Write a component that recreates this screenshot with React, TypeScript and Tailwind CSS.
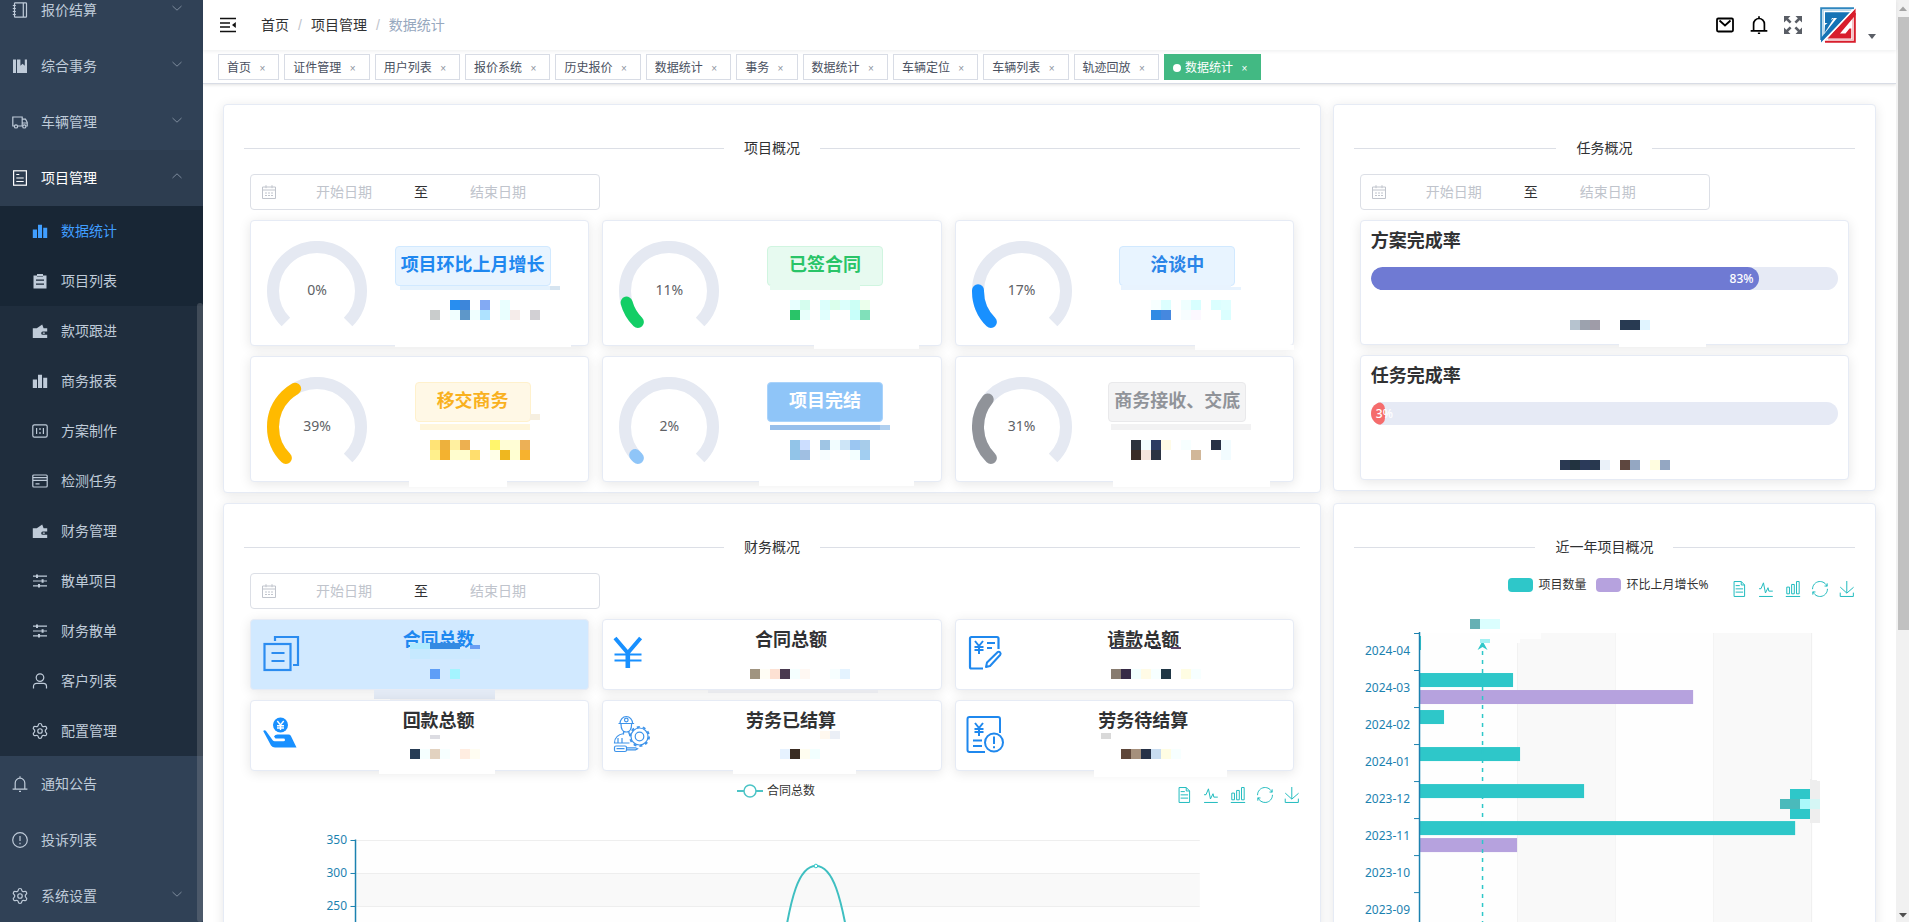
import type { ReactNode } from "react";
import { Settings } from "lucide-react";
import clsx from "clsx";

/* ---------- icons ---------- */

type IconName =
  | "notebook"
  | "collection"
  | "van"
  | "document"
  | "histogram"
  | "list"
  | "wallet"
  | "film"
  | "postcard"
  | "operation"
  | "user"
  | "bell"
  | "warning"
  | "setting";

const iconShapes: Record<Exclude<IconName, "setting">, ReactNode> = {
  notebook: (
    <>
      <rect x="2.5" y="0.8" width="12" height="14.4" rx="0.8" />
      <path d="M11.3 1v14M0.8 3.5h3M0.8 6.5h3M0.8 9.5h3M0.8 12.5h3" />
    </>
  ),
  collection: (
    <path
      fill="currentColor"
      stroke="none"
      d="M1 1.5h3v13.5H1zM5 1.5h3.4v6.2l2.2-1.9 2.2 1.9V1.5H15V15H5z"
    />
  ),
  van: (
    <>
      <path d="M2.2 12H.8V3h9.4v9H5.8M10.2 5.2h3.3l1.7 3.1V12h-1M10.2 12v-3h5" />
      <circle cx="4" cy="12.4" r="1.6" />
      <circle cx="12.3" cy="12.4" r="1.6" />
    </>
  ),
  document: (
    <>
      <rect x="1.6" y="0.8" width="12.8" height="14.4" />
      <path d="M4.3 4.5h3M4.3 8h7.4M4.3 11.5h7.4" />
    </>
  ),
  histogram: (
    <path fill="currentColor" stroke="none" d="M.8 6.5H5V15H.8zM6 1.8h4V15H6zM11.2 4.8h4V15h-4z" />
  ),
  list: (
    <path
      fill="currentColor"
      stroke="none"
      fillRule="evenodd"
      d="M1.5 2.5H5V1h6v1.5h3.5V15.5h-13zM5 3.6h6V2.9H5zM4 6.5v1.2h8V6.5zM4 10.5v1.2h8v-1.2z"
    />
  ),
  wallet: (
    <path
      fill="currentColor"
      stroke="none"
      fillRule="evenodd"
      d="M.8 5.2h4L10.2 1.4l1.4 3.8h3.6v3.4h-4.4a1.6 1.6 0 0 0 0 3.2h4.4V15H.8zM10.8 9.4h2v1.4h-2z"
    />
  ),
  film: (
    <>
      <rect x="0.8" y="1.8" width="14.4" height="12.4" rx="1.6" />
      <path d="M4.6 5v6M11.4 5v6M8 5v2M8 9v2" />
    </>
  ),
  postcard: (
    <>
      <rect x="0.8" y="2" width="14.4" height="12" rx="1" />
      <path d="M1 4.6h14M1 7.4h14M3.5 10.8h4" />
    </>
  ),
  operation: (
    <>
      <path d="M1 3.2h14M1 8h14M1 12.8h14" />
      <path strokeWidth="2" d="M5 1.4V5M10.6 6.2v3.6M7 11v3.6" />
    </>
  ),
  user: (
    <>
      <circle cx="8" cy="4.6" r="3.8" />
      <path d="M1.5 15.5v-2.2a3 3 0 0 1 3-3h7a3 3 0 0 1 3 3v2.2" />
    </>
  ),
  bell: <path d="M8 .3v1.4M3.2 13V7a4.8 4.8 0 0 1 9.6 0v6M.6 13.2h14.8M7 15.4h2" />,
  warning: (
    <>
      <circle cx="8" cy="8" r="7.3" />
      <path d="M8 4v5M8 10.8v1.4" />
    </>
  ),
};

function Icon({ name }: { name: IconName }) {
  if (name === "setting") return <Settings className="-mx-px size-[18px] shrink-0" strokeWidth={1.6} />;
  return (
    <svg viewBox="0 0 16 16" className="size-4 shrink-0" fill="none" stroke="currentColor" strokeWidth="1.2">
      {iconShapes[name]}
    </svg>
  );
}

function Chevron({ up }: { up?: boolean }) {
  return (
    <svg viewBox="0 0 10 10" className="mb-1 size-2.5" fill="none" stroke="#7d8b9c" strokeWidth="1">
      <path d={up ? "M.5 7 5 2.8 9.5 7" : "M.5 3 5 7.2 9.5 3"} />
    </svg>
  );
}

/* ---------- sidebar ---------- */

type MenuItem = { label: string; icon: IconName; arrow?: boolean };

const topMenu: MenuItem[] = [
  { label: "报价结算", icon: "notebook", arrow: true },
  { label: "综合事务", icon: "collection", arrow: true },
  { label: "车辆管理", icon: "van", arrow: true },
];

const projectMenu: MenuItem[] = [
  { label: "数据统计", icon: "histogram" },
  { label: "项目列表", icon: "list" },
  { label: "款项跟进", icon: "wallet" },
  { label: "商务报表", icon: "histogram" },
  { label: "方案制作", icon: "film" },
  { label: "检测任务", icon: "postcard" },
  { label: "财务管理", icon: "wallet" },
  { label: "散单项目", icon: "operation" },
  { label: "财务散单", icon: "operation" },
  { label: "客户列表", icon: "user" },
  { label: "配置管理", icon: "setting" },
];

const bottomMenu: MenuItem[] = [
  { label: "通知公告", icon: "bell" },
  { label: "投诉列表", icon: "warning" },
  { label: "系统设置", icon: "setting", arrow: true },
];

function MenuRow({ item, open }: { item: MenuItem; open?: boolean }) {
  return (
    <button
      className={clsx(
        "flex h-14 w-full shrink-0 items-center gap-[13px] pr-[21px] pl-3 text-left",
        open ? "bg-[#2d3d50] text-white" : "text-[#bfcbd9]"
      )}
    >
      <Icon name={item.icon} />
      <span className="flex-1">{item.label}</span>
      {item.arrow && <Chevron up={open} />}
    </button>
  );
}

function Sidebar() {
  return (
    <aside className="relative w-[203px] shrink-0 overflow-hidden bg-[#304156]">
      <nav className="-mt-[18px] flex flex-col">
        {topMenu.map((item) => (
          <MenuRow key={item.label} item={item} />
        ))}
        <MenuRow item={{ label: "项目管理", icon: "document", arrow: true }} open />
        <div className="bg-[#1f2d3d]">
          {projectMenu.map((item, i) => (
            <a
              key={item.label}
              href="#"
              className={clsx(
                "flex h-[50px] items-center gap-[13px] pl-8",
                i === 0 ? "text-[#409eff]" : "text-[#bfcbd9]",
                i < 2 && "bg-[#182635]"
              )}
            >
              <Icon name={item.icon} />
              {item.label}
            </a>
          ))}
        </div>
        {bottomMenu.map((item) => (
          <MenuRow key={item.label} item={item} />
        ))}
      </nav>
      <div className="absolute top-[303px] right-0 bottom-0 w-1.5 rounded-full bg-[#909399]/30" />
    </aside>
  );
}

/* ---------- header ---------- */

function Logo() {
  return (
    <svg viewBox="0 0 36 36" className="size-9">
      <path d="M1.2 33V1.2H34" fill="none" stroke="#2f86bf" strokeWidth="2" />
      <path d="M3.2 30V3.2H31" fill="none" stroke="#a9d0e8" strokeWidth="1.2" />
      <path d="M34.8 6v28.8H5" fill="none" stroke="#d81e2c" strokeWidth="2" />
      <path d="M32.8 9v23.8H8" fill="none" stroke="#f0b4b8" strokeWidth="1.2" />
      <path d="M5 5.2h25.5L1 35.4V31L17 11h-5l-2 5H5z" fill="#1573b5" />
      <path d="M5 18 14 11 4.500 26z" fill="#1573b5" />
      <path d="M35.6 1.500v6.500L20 26.500h5.500l4-5H31.200V31.500H7.500L3.500 35.600z" fill="#d81e2c" />
      <path d="M33.500 2.200 2.600 35.600" stroke="#fff" strokeWidth="1.300" />
    </svg>
  );
}

function Header() {
  return (
    <header className="relative z-10 flex h-[50px] shrink-0 items-center bg-white pr-5 pl-[17px] shadow-[0_1px_4px_rgba(0,21,41,0.08)]">
      <button aria-label="折叠菜单" className="mr-[25px]">
        <svg viewBox="0 0 16 16" className="size-4" fill="none" stroke="#111" strokeWidth="1.5">
          <path d="M0 1.500h16M0 6h10M0 10h10M0 14.500h16" />
          <path d="M15.8 5v6L12 8z" fill="#111" stroke="none" />
        </svg>
      </button>
      <nav className="flex items-center gap-[9px] text-[#303133]">
        <a href="#">首页</a>
        <span className="text-[#c0c4cc]">/</span>
        <a href="#">项目管理</a>
        <span className="text-[#c0c4cc]">/</span>
        <span className="text-[#97a8be]">数据统计</span>
      </nav>
      <div className="mr-[18px] ml-auto flex items-center gap-4 text-black">
        <button aria-label="消息">
          <svg viewBox="0 0 18 18" className="size-[18px]" fill="none" stroke="currentColor" strokeWidth="1.8">
            <rect x="1" y="2.5" width="16" height="13" rx="1.2" />
            <path d="m3.500 4.500 5.500 5 5.500-5" />
          </svg>
        </button>
        <button aria-label="通知">
          <svg viewBox="0 0 16 16" className="size-[18px]" fill="none" stroke="currentColor" strokeWidth="1.5">
            {iconShapes.bell}
          </svg>
        </button>
        <button aria-label="全屏">
          <svg viewBox="0 0 18 18" className="size-[18px]" fill="#5a5e66" stroke="#5a5e66" strokeWidth="2.6">
            <path stroke="none" d="M0 0h6.5L0 6.5zM18 0v6.5L11.5 0zM0 18v-6.5L6.5 18zM18 18h-6.5l6.5-6.5z" />
            <path d="m2 2 4.6 4.6M16 2l-4.6 4.6M2 16l4.6-4.6M16 16l-4.6-4.6" />
          </svg>
        </button>
      </div>
      <button aria-label="账户" className="flex items-end gap-3">
        <Logo />
        <svg viewBox="0 0 8 5" className="mb-1 h-[5px] w-2" fill="#5a5e66">
          <path d="M0 0h8L4 5z" />
        </svg>
      </button>
    </header>
  );
}

const tags = [
  "首页",
  "证件管理",
  "用户列表",
  "报价系统",
  "历史报价",
  "数据统计",
  "事务",
  "数据统计",
  "车辆定位",
  "车辆列表",
  "轨迹回放",
  "数据统计",
];

function TagsView() {
  return (
    <div className="flex h-[34px] shrink-0 items-start gap-[5px] border-b border-[#d8dce5] bg-white pt-1 pl-[15px] text-xs shadow-[0_1px_3px_rgba(0,0,0,0.12)]">
      {tags.map((tag, i) => {
        const active = i === tags.length - 1;
        return (
          <a
            key={i}
            href="#"
            className={clsx(
              "h-[26px] border px-2 leading-[26px] whitespace-nowrap",
              active ? "border-[#42b983] bg-[#42b983] text-white" : "border-[#d8dce5] bg-white text-[#495060]"
            )}
          >
            {active && <span className="mr-1 inline-block size-2 rounded-full bg-white" />}
            {tag}{" "}
            <span
              className={clsx("inline-block w-4 text-center text-[10px]", active ? "text-white" : "text-[#8d939e]")}
            >
              ×
            </span>
          </a>
        );
      })}
    </div>
  );
}

/* ---------- shared pieces ---------- */

// run of coloured cells, starting at x/y; an empty string leaves a gap
type Cells = { x: number; y: number; c: string[]; w?: number; h?: number };

function Mosaic({ cells }: { cells: Cells[] }) {
  return (
    <svg className="pointer-events-none absolute inset-0 size-full overflow-visible" shapeRendering="crispEdges">
      {cells.map((run, i) =>
        run.c.map((color, j) =>
          color ? (
            <rect
              key={`${i}-${j}`}
              x={run.x + j * (run.w ?? 10)}
              y={run.y}
              width={run.w ?? 10}
              height={run.h ?? 10}
              fill={color}
            />
          ) : null
        )
      )}
    </svg>
  );
}

function Card({ className, children }: { className?: string; children: ReactNode }) {
  return (
    <div className={clsx("rounded border border-[#e6ebf5] shadow-[0_2px_12px_0_rgba(0,0,0,0.1)]", className)}>
      {children}
    </div>
  );
}

function Panel({ title, children }: { title: string; children: ReactNode }) {
  return (
    <Card className="min-w-0 bg-white px-5 pt-5 pb-2.5">
      <div className="mb-[3px] flex h-[46px] items-center gap-5 text-[#303133]">
        <span className="h-px flex-1 bg-[#dcdfe6]" />
        <h2>{title}</h2>
        <span className="h-px flex-1 bg-[#dcdfe6]" />
      </div>
      {children}
    </Card>
  );
}

function DateRange() {
  const input = "w-32 min-w-0 bg-transparent text-center outline-none placeholder:text-[#c0c4cc]";
  return (
    <div className="flex h-9 w-[350px] max-w-full items-center rounded border border-[#dcdfe6] bg-white pl-[11px]">
      <svg viewBox="0 0 14 14" className="mr-1 size-3.5" fill="none" stroke="#c0c4cc" strokeWidth="1">
        <path d="M.5 2h13v11.5H.5zM.5 5h13M4 .2v3M10 .2v3M3 8h2M6 8h2M9 8h2M3 10.5h2M6 10.5h2M9 10.5h2" />
      </svg>
      <input className={input} placeholder="开始日期" aria-label="开始日期" />
      <span className="w-[26px] text-center text-[#303133]">至</span>
      <input className={input} placeholder="结束日期" aria-label="结束日期" />
    </div>
  );
}

/* ---------- project overview ---------- */

type Gauge = { label: string; percent: number; color: string; badge: string; cells: Cells[] };

const gauges: Gauge[] = [
  {
    label: "项目环比上月增长",
    percent: 0,
    color: "#1890ff",
    badge: "border-[#d1e9ff] bg-[#e8f4ff] text-[#1f88f0]",
    cells: [
      { x: 149, y: 65, w: 150, h: 4, c: ["#e5f2fd"] },
      { x: 299, y: 65, h: 4, c: ["#d6e4f0"] },
      { x: 199, y: 79, c: ["#288ef0", "#3d86da", "", "#83aaf3", "", "#eaffff"] },
      { x: 179, y: 89, c: ["#c9cccc", "", "#f1ffff", "#5e97c9", "#f0ffff", "#aee2ff", "", "#eaffff", "#f5ecea", "", "#d2d0d4"] },
      { x: 144, y: 124, w: 176, h: 2, c: ["#fff"] },
    ],
  },
  {
    label: "已签合同",
    percent: 11,
    color: "#13ce66",
    badge: "border-[#d0f5e0] bg-[#e7faf0] text-[#29c468]",
    cells: [
      { x: 167, y: 64, w: 90, h: 5, c: ["#e7faf0"] },
      { x: 187, y: 79, c: ["#e8ffff", "#d5fdee", "", "#dcfffc", "#dbffec", "#dcfffc", "#ccfff5", "#ebffec"] },
      { x: 187, y: 89, c: ["#29c468", "#e8fffb", "", "#e2fffe", "", "", "#c8fffa", "#80e0ba"] },
      { x: 211, y: 124, w: 105, h: 4, c: ["#fff"] },
    ],
  },
  {
    label: "洽谈中",
    percent: 17,
    color: "#1890ff",
    badge: "border-[#d1e9ff] bg-[#e8f4ff] text-[#2b85e8]",
    cells: [
      { x: 165, y: 64, w: 110, h: 5, c: ["#e8f3fe"] },
      { x: 275, y: 66, h: 3, c: ["#e8f3fe"] },
      { x: 195, y: 79, c: ["#f7ffff", "#dcffff", "", "#efffff", "#d8ffff", "", "#dbffff", "#e0ffff"] },
      { x: 195, y: 89, c: ["#318be4", "#4688df", "", "#f7fdff", "#fcf8ff", "", "", "#dbffff"] },
      { x: 239, y: 124, w: 99, h: 5, c: ["#fff"] },
    ],
  },
  {
    label: "移交商务",
    percent: 39,
    color: "#ffba00",
    badge: "border-[#fff1cc] bg-[#fff8e6] text-[#f9b11e]",
    cells: [
      { x: 169, y: 67, w: 110, h: 6, c: ["#fff6dc"] },
      { x: 279, y: 57, h: 6, c: ["#f6efe0"] },
      { x: 179, y: 83, c: ["#ffe375", "#edb13d", "#fff0a0", "#edb050", "", "", "#fff56c", "#fffdd5", "#fffdd5", "#ecb056"] },
      { x: 179, y: 93, c: ["#fff08c", "#f4b22f", "#fffdce", "#fffdce", "#ffde6d", "", "#ffffe8", "#efb71f", "#ffffd2", "#f7b22e"] },
      { x: 158, y: 124, w: 98, h: 6, c: ["#fff"] },
    ],
  },
  {
    label: "项目完结",
    percent: 2,
    color: "#8fc5f8",
    badge: "border-[#a9d3fb] bg-[#8fc5f8] text-white",
    cells: [
      { x: 167, y: 68, w: 110, h: 5, c: ["#97bfeb"] },
      { x: 277, y: 68, h: 5, c: ["#b0d0f0"] },
      { x: 187, y: 83, c: ["#92c4e8", "#ccdeff", "", "#9fc5e4", "#f2fdff", "#cde5f7", "#9bc6f2", "#a7ccea"] },
      { x: 187, y: 93, c: ["#92c4e8", "#a0bfe2", "", "#f7fdff", "", "", "#f3ffff", "#a2cef1"] },
      { x: 156, y: 124, w: 155, h: 5, c: ["#fff"] },
    ],
  },
  {
    label: "商务接收、交底",
    percent: 31,
    color: "#909399",
    badge: "border-[#e9e9eb] bg-[#f4f4f5] text-[#909399]",
    cells: [
      { x: 155, y: 67, w: 140, h: 6, c: ["#f2f2f3"] },
      { x: 175, y: 83, c: ["#2d333d", "#f2fdff", "#2c3b62", "#fffbe6", "", "#f7ffff", "", "", "#283145", "#f2fcff"] },
      { x: 175, y: 93, c: ["#3a2c27", "#f5e4dd", "#2b3342", "", "", "", "#d1b799", "", "", "#f2fcff"] },
      { x: 157, y: 124, w: 157, h: 6, c: ["#fff"] },
    ],
  },
];

const arc = "M18.9 81.1A44 44 0 1 1 81.1 81.1";

function GaugeCard({ gauge }: { gauge: Gauge }) {
  return (
    <Card className="relative flex h-[126px] items-start bg-white pt-5 pr-2.5 pl-4">
      <div className="relative size-[100px] shrink-0">
        <svg viewBox="0 0 100 100" className="size-full" fill="none" strokeWidth="12">
          <path d={arc} stroke="#e5e9f2" />
          {gauge.percent > 0 && (
            <path
              d={arc}
              stroke={gauge.color}
              strokeLinecap="round"
              pathLength="100"
              strokeDasharray={`${gauge.percent} 200`}
            />
          )}
        </svg>
        <span className="absolute inset-0 flex items-center justify-center pb-0.5 font-['Noto_Sans'] text-[#606266]">
          {gauge.percent}%
        </span>
      </div>
      <div className="flex min-w-0 flex-1 justify-center pt-[5px]">
        <span
          className={clsx(
            "flex h-10 min-w-[116px] items-center justify-center rounded border px-[5px] pb-0.5 text-lg font-bold whitespace-nowrap",
            gauge.badge
          )}
        >
          {gauge.label}
        </span>
      </div>
      <Mosaic cells={gauge.cells} />
    </Card>
  );
}

/* ---------- task overview ---------- */

const tasks = [
  {
    label: "方案完成率",
    percent: 83,
    color: "#6f7ad3",
    cells: [
      { x: 209, y: 99, c: ["#b6c3cf", "#9ca2ae", "#9f9ca8", "", "", "#283a52", "#283a52", "#e0f4ff"] },
      { x: 258, y: 123, w: 87, h: 3, c: ["#fff"] },
    ],
  },
  {
    label: "任务完成率",
    percent: 3,
    color: "#f56c6c",
    cells: [
      { x: 199, y: 104, c: ["#2a3952", "#22333f", "#2b3a5a", "#28384f", "#eaf1f9", "", "#5e473f", "#94a7c2", "", "#fffde0", "#94a7c2"] },
    ],
  },
];

function TaskCard({ task }: { task: (typeof tasks)[number] }) {
  return (
    <Card className="relative h-[125px] bg-white px-2.5 pt-1.5">
      <h3 className="text-lg leading-7 font-bold text-[#303133]">{task.label}</h3>
      <div className="mt-3 h-[23px] overflow-hidden rounded-full bg-[#e6eaf5]">
        <div
          className="flex h-full items-center justify-end rounded-full pr-[5px] pl-1 font-['Noto_Sans'] text-xs font-medium text-white"
          style={{ width: `${task.percent}%`, backgroundColor: task.color }}
        >
          <span className={task.percent < 10 ? "w-1" : undefined}>{task.percent}%</span>
        </div>
      </div>
      <Mosaic cells={task.cells} />
    </Card>
  );
}

/* ---------- finance overview ---------- */

const financeIcons = {
  copy: (
    <g fill="none" stroke="#2b8cf0" strokeWidth="2.2">
      <rect x="3.5" y="11" width="26" height="26" />
      <path d="M14 8V4h23v28h-5M10.5 20h13M10.5 28h13" />
    </g>
  ),
  yen: (
    <g fill="none" stroke="#1890ff">
      <path strokeWidth="4" d="M2 5l12.8 15L27.6 5" />
      <path strokeWidth="4.6" d="M14.8 18v17" />
      <path strokeWidth="2.2" d="M1.5 21.5h27M1.5 27.5h27" />
    </g>
  ),
  request: (
    <g fill="none" stroke="#1f88ee" strokeWidth="2.2" strokeLinejoin="round">
      <path d="M32.5 16V5.5q0-1.5-1.5-1.5H5.5q-1.5 0-1.5 1.5V34q0 1.5 1.5 1.5H17" />
      <path d="M21 10h8M21 15h5" strokeWidth="2" />
      <path d="m20 34 1-4.5L31.5 19.2q1.5-1 2.6.2 1.1 1.3 0 2.6L24 33z" strokeWidth="2" />
      <path d="m9 8 4 5 4-5M13 12.5V21M8.5 14h9M8.5 17h9" strokeWidth="2" />
    </g>
  ),
  hand: (
    <g fill="#1890ff">
      <circle cx="19.5" cy="11" r="7.5" />
      <path d="M2.2 17q1.6-1.4 3 .2l6.500 9q.8 1 2 1h8.800q1.500 0 1.500-1.300t-1.500-1.300h-8l-1.500-2q1-2 3.500-2h11q1.500 0 2.300 1.200L35.500 33.500H14q-2.500 0-4-2z" />
      <path d="m16.300 7 3.200 4 3.200-4M19.500 11v5M16 11.800h7M16 14h7" fill="none" stroke="#fff" strokeWidth="1.4" />
    </g>
  ),
  worker: (
    <g fill="none" stroke="#3d93ea" strokeWidth="1.2">
      <path d="M7 9.5a6.3 7 0 0 1 12.6 0zM5.5 9.5h15.6M8 10q0 8 5.3 8t5.3-8M10.5 17v3.5M16 17v3" />
      <circle cx="13.3" cy="6" r="1.8" />
      <path d="M11 19.5Q1.5 21 1.5 29h15M5 24v5M9 24v5M16 20l2 2" />
      <circle cx="26.5" cy="22.5" r="4.3" />
      <circle cx="26.5" cy="22.5" r="8.5" />
      <circle cx="26.5" cy="22.5" r="9.6" strokeDasharray="3 3.03" strokeWidth="1.8" />
      <rect x="1.5" y="32" width="12" height="5.5" rx="1.5" />
      <path d="M3.5 34.7h8M13.5 33.8h9l2 1-2 1h-9" />
    </g>
  ),
  pending: (
    <g fill="none" stroke="#1f88ee" strokeWidth="2">
      <path d="M34 19V5q0-2-2-2H3.5q-2 0-2 2v31q0 2 2 2H19" />
      <path d="m9 9 4 5 4-5M13 13.5V22M8.5 15h9M8.5 18h9M7 26.5h9M7 32h9" />
      <circle cx="28" cy="28.5" r="9" />
      <path d="M28 22.5v7.5M28 32.2v2" />
    </g>
  ),
};

type FinanceItem = { label: string; icon: keyof typeof financeIcons; cells: Cells[] };

const financeItems: FinanceItem[] = [
  {
    label: "合同总数",
    icon: "copy",
    cells: [
      { x: 159, y: 23, w: 20, h: 6, c: ["#aeeaff"] },
      { x: 179, y: 23, w: 30, h: 6, c: ["#348ae2"] },
      { x: 219, y: 25, h: 4, c: ["#6b9ef3"] },
      { x: 159, y: 29, w: 20, c: ["#c6e9ff"] },
      { x: 179, y: 29, w: 50, c: ["#cce9ff"] },
      { x: 179, y: 49, c: ["#5e9ef7", "", "#a4f4ff"] },
      { x: 123, y: 70, w: 121, h: 9, c: ["#e3eaf5"] },
      { x: 139, y: 79, w: 105, h: 5, c: ["#f4f4f7"] },
    ],
  },
  {
    label: "合同总额",
    icon: "yen",
    cells: [
      { x: 147, y: 49, c: ["#a09480", "#fffdf5", "#fde1d3", "#4a3a50", "#f5ffff", "#fff8f3", "", "", "#f7feff", "#e4f3ff"] },
      { x: 105, y: 70, w: 170, h: 3, c: ["#e9eaee"] },
    ],
  },
  {
    label: "请款总额",
    icon: "request",
    cells: [
      { x: 155, y: 27, h: 2, c: ["#3a3d58", "#55525a", "#55525a", "", "#2a2a35", "", "#5c4468"] },
      { x: 155, y: 49, c: ["#887c70", "#362a46", "#f2ffff", "#fffbe6", "#f7ffff", "#203746", "", "#fffde3", "#f7ffff"] },
    ],
  },
  {
    label: "回款总额",
    icon: "hand",
    cells: [
      { x: 179, y: 34, h: 4, c: ["#dcdce2"] },
      { x: 159, y: 48, c: ["#263c55", "#f5ffff", "#e2d2c0", "#f7ffff", "", "#ffede1", "#fffdf2"] },
      { x: 128, y: 69, w: 116, h: 4, c: ["#fff"] },
    ],
  },
  {
    label: "劳务已结算",
    icon: "worker",
    cells: [
      { x: 217, y: 30, h: 8, c: ["#fff8ef", "#ebeff6"] },
      { x: 177, y: 48, c: ["#e6f2ff", "#3a2c22", "#fffdf0", "#f2ffff"] },
      { x: 130, y: 69, w: 123, h: 4, c: ["#fff"] },
    ],
  },
  {
    label: "劳务待结算",
    icon: "pending",
    cells: [
      { x: 145, y: 32, h: 6, c: ["#d9d9d9"] },
      { x: 165, y: 48, c: ["#5e473a", "#a5907c", "#263147", "#c8dcf0", "#fffde3", "#f7ffff"] },
      { x: 138, y: 69, w: 133, h: 7, c: ["#fff"] },
    ],
  },
];

function FinanceCard({ item, active }: { item: FinanceItem; active: boolean }) {
  return (
    <Card className={clsx("relative flex h-[71px] items-center pr-3 pl-2.5", active ? "bg-[#d1e9ff]" : "bg-white")}>
      <svg viewBox="0 0 40 40" className="mb-1 size-10 shrink-0">
        {financeIcons[item.icon]}
      </svg>
      <h3
        className={clsx(
          "flex-1 self-start pt-1.5 text-center text-lg leading-7 font-bold",
          active ? "text-[#1f88f0]" : "text-[#303133]"
        )}
      >
        {item.label}
      </h3>
      <Mosaic cells={item.cells} />
    </Card>
  );
}

/* ---------- charts ---------- */

const tools = [
  {
    label: "数据视图",
    d: "M17.5,17.3H33M45.4,29.5h-28M11.5,2v56H51V14.8L38.4,2H11.5zM38.4,2.2v12.7H51M45.4,41.7h-28",
  },
  { label: "切换为折线图", d: "M4.1,28.9h7.1l9.3-22l7.4,38l9.7-19.7l3,12.8h14.9M4.1,58h51.4" },
  { label: "切换为柱状图", d: "M6.7,22.9h10V48h-10V22.9zM24.9,13h10v35h-10V13zM43.2,2h10v46h-10V2zM3.1,58h53.7" },
  {
    label: "还原",
    d: "M47,18.9h9.8V8.7M56.3,20.1C52.1,9,40.5,0.6,26.8,2.1C12.6,3.7,1.6,16.2,2.1,30.6M13,41.1H3.1v10.2M3.7,39.9c4.2,11.1,15.8,19.5,29.5,18c14.2-1.6,25.2-14.1,24.7-28.5",
  },
  { label: "保存为图片", d: "M4.7,22.9L29.3,45.5L54.7,23.4M4.6,43.6L4.6,58L53.8,58L53.8,43.6M29.2,45.1L29.2,0" },
];

function ChartHeader({ children }: { children: ReactNode }) {
  return (
    <div className="grid grid-cols-[1fr_auto_1fr] items-start">
      <div className="col-start-2 flex h-5 items-center gap-2.5 pl-2 text-xs text-[#333]">{children}</div>
      <div className="mt-1.5 flex gap-[11px] justify-self-end">
        {tools.map((tool) => (
          <button key={tool.label} aria-label={tool.label} className="size-4">
            <svg
              viewBox="0 0 60 60"
              className="size-4 overflow-visible"
              fill="none"
              stroke="#22bcbf"
              strokeWidth="3.75"
            >
              <path d={tool.d} />
            </svg>
          </button>
        ))}
      </div>
    </div>
  );
}

function ContractChart() {
  return (
    <div className="pt-2.5">
      <ChartHeader>
        <span className="flex items-center gap-1">
          <svg viewBox="0 0 26 14" className="h-3.5 w-[26px]" stroke="#4cc4c6" strokeWidth="2">
            <path d="M0 7h26" />
            <circle cx="13" cy="7" r="6" fill="#fff" strokeWidth="1.5" />
          </svg>
          合同总数
        </span>
      </ChartHeader>
      <svg viewBox="0 0 1056 136" className="block w-full">
        {[350, 300, 250].map((value, i) => (
          <g key={value}>
            <rect x="112" y={37.5 + i * 33} width="844" height="33" fill={i % 2 ? "#f9f9f9" : "#fefefe"} />
            <path d={`M112 ${37.5 + i * 33}h844`} stroke="#eee" />
            <path d={`M106.5 ${37.5 + i * 33}h5`} stroke="#1c82b0" />
            <text x="103" y={41 + i * 33} textAnchor="end" fontSize="12" fill="#1c82b0">
              {value}
            </text>
          </g>
        ))}
        <path d="M111.5 36.5V136" stroke="#1c82b0" strokeWidth="1.5" />
        <path
          d="M528 267 536 168C546 88 556 63 572 63S598 88 609 168L617 267"
          fill="none"
          stroke="#3fbfc1"
          strokeWidth="2"
        />
        <circle cx="572" cy="63" r="1.8" fill="#fff" stroke="#2ec7c9" />
      </svg>
    </div>
  );
}

const months = [
  { name: "2024-04", count: 1, rate: 0 },
  { name: "2024-03", count: 93, rate: 273 },
  { name: "2024-02", count: 24, rate: 0 },
  { name: "2024-01", count: 100, rate: 0 },
  { name: "2023-12", count: 164, rate: 0 },
  { name: "2023-11", count: 375, rate: 97 },
  { name: "2023-10", count: 0, rate: 0 },
  { name: "2023-09", count: 0, rate: 0 },
];

function YearChart() {
  return (
    <div className="pt-0.5">
      <ChartHeader>
        <span className="flex items-center gap-[5px]">
          <i className="h-3.5 w-[25px] rounded bg-[#2ec7c9]" />
          项目数量
        </span>
        <span className="flex items-center gap-[5px]">
          <i className="h-3.5 w-[25px] rounded bg-[#b6a2de]" />
          环比上月增长%
        </span>
      </ChartHeader>
      <svg viewBox="0 0 501 334" className="block w-full">
        {[0, 1, 2, 3].map((i) => (
          <g key={i}>
            <rect x={65.5 + i * 98} y="36" width="98" height="298" fill={i % 2 ? "#f9f9f9" : "#fefefe"} />
            <path d={`M${163.5 + i * 98} 36v298`} stroke="#eee" />
          </g>
        ))}
        {months.map((m, i) => (
          <g key={m.name}>
            <path d={`M60 ${36.5 + i * 37}h5`} stroke="#1c82b0" />
            <text x="56" y={58 + i * 37} textAnchor="end" fontSize="12" fill="#1c82b0">
              {m.name}
            </text>
            <rect x="66" y={39 + i * 37} width={m.count} height="14" fill="#2ec7c9" />
            <rect x="66" y={56 + i * 37} width={m.rate} height="14" fill="#b6a2de" />
          </g>
        ))}
        <path d="M65.5 35v299" stroke="#1c82b0" strokeWidth="1.5" />
        <path d="M90 36h97v6h-21v4H90z" fill="#fefefe" />
        <path d="M128.5 54v280" stroke="#2ec7c9" strokeWidth="1.5" strokeDasharray="4 5" />
        <path d="m128.5 44 5 9-5-3-5 3z" fill="#2ec7c9" />
        <g shapeRendering="crispEdges">
          <path d="M116 22h10v10h-10z" fill="#66b0b4" />
          <path d="M126 22h20v10h-20z" fill="#dbfefe" />
          <path d="M126 42h10v4h-10z" fill="#a4f1f3" />
          <path d="M456 182l10 2v42h-10z" fill="#eee" />
          <path d="M436 192h20v30h-20z" fill="#2ec7c9" />
          <path d="M426 202h20v10h-20z" fill="#4ababb" />
          <path d="M446 202h10v10h-10z" fill="#aaf9fb" />
          <path d="M456 202h10v10h-10z" fill="#d5f6f5" />
        </g>
      </svg>
    </div>
  );
}

/* ---------- page ---------- */

function WindowScrollbar() {
  return (
    <div className="flex w-[13px] shrink-0 flex-col bg-[#f1f1f1]">
      <svg viewBox="0 0 13 17" className="h-[17px] w-full" fill="#a3a3a3">
        <path d="M3 11h8L7 6.5z" />
      </svg>
      <div className="flex-1 pl-0.5">
        <div className="h-[69%] bg-[#c1c1c1]" />
      </div>
      <svg viewBox="0 0 13 17" className="h-[17px] w-full" fill="#505050">
        <path d="M3 8h8l-4 4.5z" />
      </svg>
    </div>
  );
}

export default function App() {
  return (
    <div className="flex h-screen overflow-hidden bg-white font-['Liberation_Sans','Noto_Sans_CJK_SC',sans-serif] text-sm">
      <Sidebar />
      <div className="flex min-w-0 flex-1 flex-col">
        <Header />
        <TagsView />
        <main className="min-h-0 flex-1 overflow-hidden p-5">
          <div className="grid grid-cols-[669fr_331fr] items-start gap-x-3 gap-y-2.5">
            <Panel title="项目概况">
              <div className="px-1.5">
                <DateRange />
                <div className="mt-2.5 grid grid-cols-3 gap-x-[13px] gap-y-2.5">
                  {gauges.map((gauge) => (
                    <GaugeCard key={gauge.label} gauge={gauge} />
                  ))}
                </div>
              </div>
            </Panel>

            <Panel title="任务概况">
              <div className="px-1.5">
                <DateRange />
                <div className="mt-2.5 flex flex-col gap-2.5">
                  {tasks.map((task) => (
                    <TaskCard key={task.label} task={task} />
                  ))}
                </div>
              </div>
            </Panel>

            <Panel title="财务概况">
              <div className="px-1.5">
                <DateRange />
                <div className="mt-2.5 grid grid-cols-3 gap-x-[13px] gap-y-2.5">
                  {financeItems.map((item, i) => (
                    <FinanceCard key={item.label} item={item} active={i === 0} />
                  ))}
                </div>
              </div>
              <div className="font-['Noto_Sans','Noto_Sans_CJK_SC',sans-serif]">
                <ContractChart />
              </div>
            </Panel>

            <Panel title="近一年项目概况">
              <div className="font-['Noto_Sans','Noto_Sans_CJK_SC',sans-serif]">
                <YearChart />
              </div>
            </Panel>
          </div>
        </main>
      </div>
      <WindowScrollbar />
    </div>
  );
}
